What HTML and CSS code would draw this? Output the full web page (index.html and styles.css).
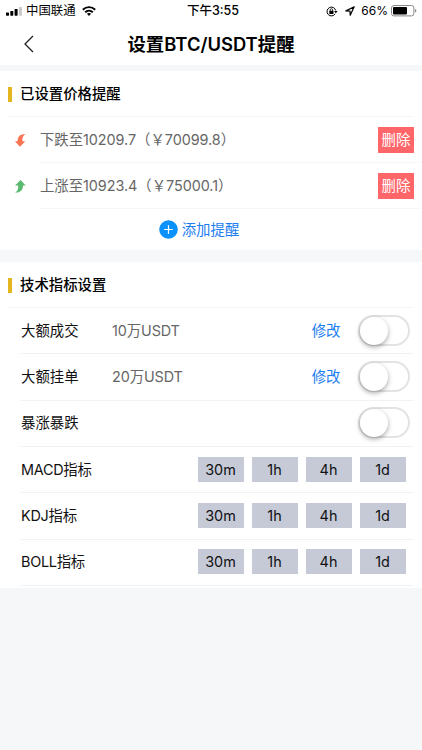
FILE: index.html
```html
<!DOCTYPE html>
<html lang="zh-CN">

<head>
    <meta charset="UTF-8">
    <meta name="viewport" content="width=device-width, initial-scale=1.0">
    <title>设置BTC/USDT提醒</title>
    <link rel="stylesheet" href="styles.css">
</head>

<body>

    <header class="header">
        <div class="status">
            <div class="status-left">
                <svg class="signal" width="16" height="9" viewBox="0 0 16 9">
                    <rect x="0" y="5.5" width="3" height="3.2" rx="0.6"/>
                    <rect x="4.3" y="4" width="3" height="4.7" rx="0.6"/>
                    <rect x="8.6" y="2" width="3" height="6.7" rx="0.6"/>
                    <rect x="12.9" y="0" width="3" height="8.7" rx="0.6" fill="#c8c8c8"/>
                </svg>
                <span class="carrier">中国联通</span>
                <svg class="wifi" width="14" height="10" viewBox="0 0 14 10" fill="none" stroke="#000" stroke-width="1.9">
                    <path d="M0.8 3.7C4.3 0.3 9.7 0.3 13.2 3.7"/>
                    <path d="M3.2 6.2C5.4 4.1 8.6 4.1 10.8 6.2"/>
                    <path d="M7 9.9L4.9 7.8C6.1 6.7 7.9 6.7 9.1 7.8Z" fill="#000" stroke="none"/>
                </svg>
            </div>
            <span class="clock">下午3:55</span>
            <div class="status-right">
                <svg class="lock" width="12" height="11" viewBox="0 0 12 11" fill="none" stroke="#000">
                    <path d="M9.2 7.8A4.4 4.4 0 1 1 9.7 4.4"/>
                    <path d="M8 4.9H11.6L9.8 7.2Z" fill="#000" stroke="none"/>
                    <rect x="3.3" y="4.8" width="4.2" height="3.2" fill="#000" stroke="none"/>
                    <path d="M4.2 5V3.9A1.2 1.2 0 0 1 6.6 3.9V5" stroke-width="0.8"/>
                </svg>
                <svg class="location" width="10" height="10" viewBox="0 0 10 10" fill="none" stroke="#000" stroke-linejoin="round">
                    <path d="M9.2 0.8L0.9 4.9L5 5.1L5.2 9.2Z" stroke-width="1.2"/>
                </svg>
                <span class="percent">66%</span>
                <svg class="battery" width="26" height="12" viewBox="0 0 26 12">
                    <rect x="0.5" y="0.5" width="22.4" height="10.4" rx="2.4" fill="#fff" stroke="#888"/>
                    <rect x="2" y="2" width="14" height="7.4" rx="0.8"/>
                    <path d="M24 4V7.6Q25.4 7 25.4 5.8Q25.4 4.6 24 4Z" fill="#888"/>
                </svg>
            </div>
        </div>
        <div class="nav">
            <svg class="back" width="10" height="18" viewBox="0 0 10 18" fill="none" stroke="#222" stroke-width="1.3">
                <path d="M9 1L1 9L9 17"/>
            </svg>
            <h1 class="nav-title">设置BTC/USDT提醒</h1>
        </div>
    </header>

    <section class="card alerts">
        <h2 class="card-title">已设置价格提醒</h2>
        <div class="alert-row">
            <svg class="arrow" width="11" height="13" viewBox="0 0 11 13" fill="#fa7553">
                <path d="M10.4 0C5 0 2.6 2.8 2.6 7.2H0L4.9 12.8L10.3 7.2H7.5C7 4.3 7.8 1.9 10.4 0Z"/>
            </svg>
            <div class="alert-body">
                <span class="alert-text">下跌至10209.7（￥70099.8）</span>
                <button class="delete">删除</button>
            </div>
        </div>
        <div class="alert-row">
            <svg class="arrow" width="11" height="13" viewBox="0 0 11 13" fill="#5cba70">
                <path d="M0.2 12.8C5.6 12.8 8 10 8 5.6H10.7L5.6 0L0 5.6H3C3.6 8.5 2.8 10.9 0.2 12.8Z"/>
            </svg>
            <div class="alert-body">
                <span class="alert-text">上涨至10923.4（￥75000.1）</span>
                <button class="delete">删除</button>
            </div>
        </div>
        <div class="add">
            <svg width="19" height="19" viewBox="0 0 19 19">
                <circle cx="9.5" cy="9.5" r="9.3" fill="#0a91fb"/>
                <path d="M9.5 5.2V13.8M5.2 9.5H13.8" stroke="#fff" stroke-width="1.2"/>
            </svg>
            <span>添加提醒</span>
        </div>
    </section>

    <section class="card indicators">
        <h2 class="card-title">技术指标设置</h2>
        <div class="row">
            <span class="label">大额成交</span>
            <span class="value">10万USDT</span>
            <a class="edit">修改</a>
            <span class="switch"></span>
        </div>
        <div class="row">
            <span class="label">大额挂单</span>
            <span class="value">20万USDT</span>
            <a class="edit">修改</a>
            <span class="switch"></span>
        </div>
        <div class="row">
            <span class="label">暴涨暴跌</span>
            <span class="switch"></span>
        </div>
        <div class="row">
            <span class="label latin">MACD指标</span>
            <div class="periods"><span>30m</span><span>1h</span><span>4h</span><span>1d</span></div>
        </div>
        <div class="row">
            <span class="label latin">KDJ指标</span>
            <div class="periods"><span>30m</span><span>1h</span><span>4h</span><span>1d</span></div>
        </div>
        <div class="row">
            <span class="label latin">BOLL指标</span>
            <div class="periods"><span>30m</span><span>1h</span><span>4h</span><span>1d</span></div>
        </div>
    </section>

</body>

</html>
```

FILE: styles.css
```css
* {
    box-sizing: border-box;
}

body {
    margin: 0;
    background-color: #f6f7f9;
    color: #111;
    font-family: Inter, "Noto Sans CJK SC", sans-serif;
    font-size: 14.4px;
    line-height: 20px;
}

svg {
    display: block;
    flex-shrink: 0;
}

.header {
    height: 65px;
    background-color: #fff;
}

.status {
    display: grid;
    grid-template-columns: 1fr auto 1fr;
    align-items: center;
    height: 21px;
    padding: 1px 5px 0 6px;
    color: #000;
    font-size: 12.4px;
}

.status-left,
.status-right {
    display: flex;
    align-items: center;
}

.status-right {
    justify-content: flex-end;
}

.carrier {
    margin: 0 6px 0 4px;
}

.clock {
    padding-left: 3px;
    font-weight: 500;
    font-size: 12.5px;
}

.location {
    margin: 0 6px 0 7px;
}

.percent {
    margin-right: 3px;
    font-size: 12px;
}

.nav {
    display: grid;
    grid-template-columns: 1fr auto 1fr;
    align-items: center;
    height: 45px;
}

.back {
    margin-left: 23.5px;
}

.nav-title {
    margin: 0;
    color: #000;
    font-size: 18.4px;
    font-weight: 600;
    line-height: 26px;
}

.card {
    background-color: #fff;
}

.alerts {
    height: 179px;
    margin-top: 6px;
}

.indicators {
    height: 326px;
    margin-top: 12px;
}

.card-title {
    display: flex;
    align-items: center;
    gap: 8px;
    height: 46px;
    margin: 0 9px 0 8px;
    padding-top: 1px;
    border-bottom: 1px solid #f5f5f6;
    color: #000;
    font-size: 14.4px;
    font-weight: 500;
}

.card-title::before {
    content: "";
    width: 4px;
    height: 15px;
    background-color: #e3b51f;
}

.alert-row {
    display: flex;
    align-items: center;
    height: 46px;
}

.arrow {
    margin: 0 14px 0 15px;
}

.alert-body {
    flex: 1;
    display: flex;
    align-items: center;
    justify-content: space-between;
    height: 46px;
    padding: 1px 8px 0 0;
    border-bottom: 1px solid #f7f7f8;
}

.alert-text {
    color: #666;
    letter-spacing: -0.05px;
}

.delete {
    width: 36px;
    height: 26px;
    padding: 0;
    border: 0;
    background-color: #ff666a;
    color: #fff;
    font: inherit;
}

.add {
    display: flex;
    align-items: center;
    justify-content: center;
    gap: 4px;
    height: 41px;
    padding-right: 24px;
    color: #1c7df0;
}

.row {
    display: flex;
    align-items: center;
    height: 46.35px;
    margin: 0 9px 0 21px;
    border-bottom: 1px solid #f2f2f3;
}

.label {
    width: 91px;
}

.latin {
    letter-spacing: -0.25px;
}

.value {
    color: #666;
    letter-spacing: -0.1px;
}

.edit {
    margin-left: auto;
    margin-right: 17px;
    color: #1c7df0;
}

.switch {
    width: 52px;
    height: 31px;
    margin-right: 3.5px;
    margin-bottom: 1px;
    border: 2px solid #e3e3e3;
    border-radius: 16px;
}

.label + .switch {
    margin-left: auto;
}

.switch::before {
    content: "";
    display: block;
    width: 28px;
    height: 28px;
    border-radius: 50%;
    background-color: #fff;
    box-shadow: 0 2px 5px rgba(0, 0, 0, 0.35);
}

.periods {
    display: flex;
    gap: 8px;
    margin-left: auto;
    margin-right: 7.5px;
    margin-bottom: 1px;
}

.periods span {
    width: 46px;
    height: 25px;
    background-color: #c6cad7;
    line-height: 25px;
    text-align: center;
}
```
